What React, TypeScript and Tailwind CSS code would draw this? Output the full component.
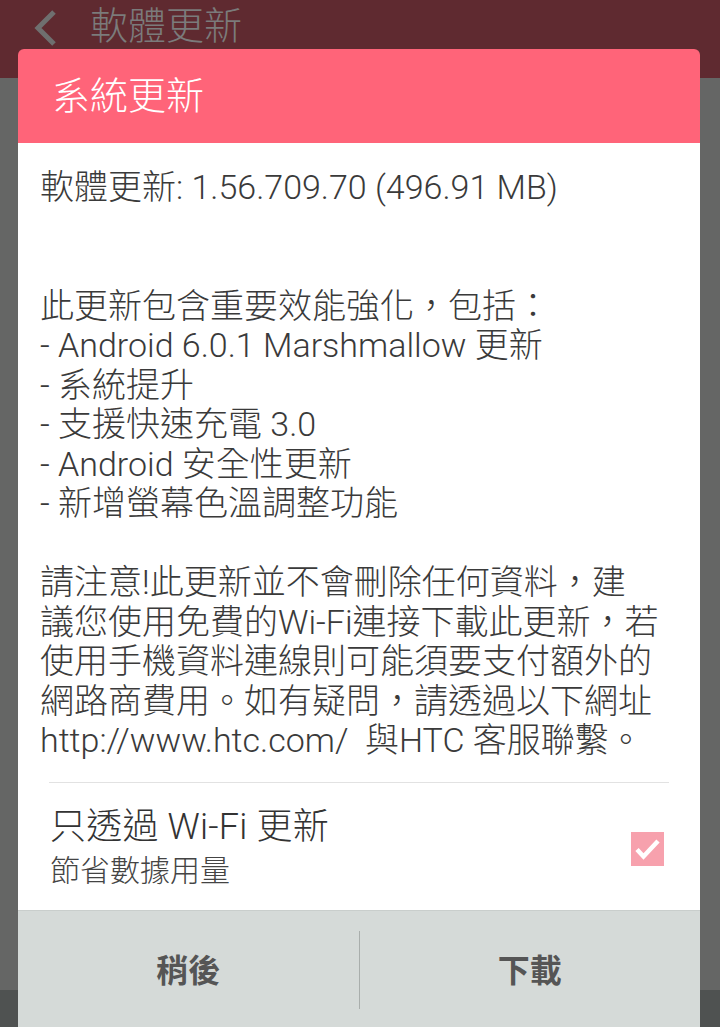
import React from 'react';

const FONT = "font-['Roboto','Noto_Sans_CJK_TC',sans-serif]";

const bodyLines = [
  '軟體更新: 1.56.709.70 (496.91 MB)',
  '',
  '',
  '此更新包含重要效能強化，包括：',
  '- Android 6.0.1 Marshmallow 更新',
  '- 系統提升',
  '- 支援快速充電 3.0',
  '- Android 安全性更新',
  '- 新增螢幕色溫調整功能',
  '',
  '請注意!此更新並不會刪除任何資料，建',
  '議您使用免費的Wi-Fi連接下載此更新，若',
  '使用手機資料連線則可能須要支付額外的',
  '網路商費用。如有疑問，請透過以下網址',
  'http://www.htc.com/  與HTC 客服聯繫。',
];

export default function App(): React.JSX.Element {
  return (
    <div className={`relative w-[720px] h-[1027px] overflow-hidden flex flex-col bg-[#656665] ${FONT}`}>
      {/* app bar behind the dim */}
      <header className="h-[78px] bg-[#5f2a30] flex items-start pt-[6px] pl-[30px] gap-[30px]">
        <svg viewBox="0 0 30 40" className="w-[30px] h-[40px] mt-[2px]" fill="none" stroke="#6f6f6f" strokeWidth={5}>
          <path d="M24 4L8 20l16 16" />
        </svg>
        <h1 className="text-[38px] leading-[40px] font-light text-[#7b7b7b]">軟體更新</h1>
      </header>
      <div className="flex-1" />
      <div className="h-[37px] bg-[#4f5251]" />

      {/* dialog */}
      <div className="absolute left-[18px] top-[49px] w-[682px] flex flex-col">
        <div className="h-[94px] bg-[#ff6479] rounded-t-[6px] flex items-center pl-[34px]">
          <h2 className="text-[38px] font-light text-white">系統更新</h2>
        </div>
        <div className="bg-white pt-[25px]">
          <div className="pl-[22px] text-[34px] leading-[39.5px] font-light text-[#3a3a3a] whitespace-pre">
            {bodyLines.map((l, i) => (
              <div key={i} className="h-[39.5px]">{l}</div>
            ))}
          </div>
          <div className="mx-[31px] mt-[21px] h-px bg-[#e2e2e2]" />
          <div className="flex items-center pl-[32px] pr-[36px] pt-[22px] pb-[17px]">
            <div className="flex-1 flex flex-col">
              <span className="text-[36px] leading-[44px] font-light text-[#333] tracking-[0.2px]">只透過 Wi-Fi 更新</span>
              <span className="text-[30px] leading-[44px] font-light text-[#444]">節省數據用量</span>
            </div>
            <div className="w-[33px] h-[34px] bg-[#f7a1ad] flex items-center justify-center">
              <svg viewBox="0 0 33 34" className="w-[33px] h-[34px]" fill="none" stroke="#fff" strokeWidth={4.5} strokeLinecap="butt" strokeLinejoin="miter">
                <path d="M6 17.5l6.5 7L27 9" />
              </svg>
            </div>
          </div>
        </div>
        <div className="h-[130px] bg-[#d5dad8] border-t border-[#c9cecc] flex">
          <button className="flex-1 h-[120px] flex items-center justify-center text-[32px] font-bold text-[#555]">稍後</button>
          <div className="w-px bg-[#a9aeac] mt-[20px] h-[78px]" />
          <button className="flex-1 h-[120px] flex items-center justify-center text-[32px] font-bold text-[#555]">下載</button>
        </div>
      </div>
    </div>
  );
}
